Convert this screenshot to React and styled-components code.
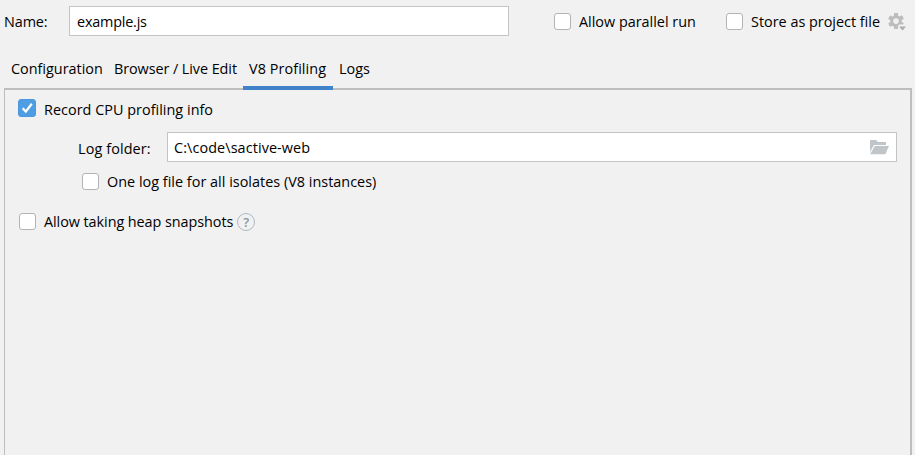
import React from "react";
import styled, { createGlobalStyle } from "styled-components";

const GlobalStyle = createGlobalStyle`
  * { box-sizing: border-box; }
  html, body { margin: 0; background: #f1f1f1; overflow: hidden; }
  body { font: 14.4px/20px "Open Sans", "Noto Sans", sans-serif; color: #000; }
`;

const Window = styled.div`
  display: flex;
  flex-direction: column;
  width: 915px;
  height: 455px;
  overflow: hidden;
  background: #f1f1f1;
`;

const Header = styled.header`
  display: flex;
  align-items: center;
  height: 30px;
  margin-top: 6px;
  padding-left: 4px;
`;

const Text = styled.span`
  display: block;
  white-space: nowrap;
  letter-spacing: ${(p) => p.$spacing || 0}px;
`;

const NameLabel = styled.label`
  width: 65px;
  padding-top: 1px;
`;

const Field = styled.div`
  display: flex;
  align-items: center;
  width: ${(p) => p.$width}px;
  height: 30px;
  padding: 2px 7px 0 ${(p) => p.$inset ?? 7}px;
  border: 1px solid #c4c4c4;
  background: #fff;
`;

const Spacer = styled.div`
  flex: 1;
`;

const Option = styled.div`
  display: flex;
  align-items: center;
  gap: 8px;
  height: 20px;
`;

const RecordOption = styled(Option)`
  height: 22px;
  margin-bottom: -2px;
`;

const Box = styled.span`
  display: flex;
  flex: none;
  width: ${(p) => (p.$checked ? 18 : 17)}px;
  height: ${(p) => (p.$checked ? 18 : 17)}px;
  margin-left: ${(p) => (p.$checked ? -1 : 0)}px;
  margin-bottom: ${(p) => (p.$checked ? 4 : 1)}px;
  border-radius: 3px;
  border: 1px solid ${(p) => (p.$checked ? "#4b97dc" : "#b4b4b4")};
  background: ${(p) => (p.$checked ? "#4f9ee3" : "#fff")};
`;

const HeaderOption = styled(Option)`
  margin-left: ${(p) => p.$gap}px;
  padding-top: 1px;
`;

const GearIcon = styled.svg`
  flex: none;
  width: 18px;
  height: 19px;
  margin: 2px 9px 0 8px;
`;

const FolderIcon = styled.svg`
  flex: none;
  width: 19px;
  height: 15px;
  margin-bottom: 2px;
`;

const Tabs = styled.nav`
  display: flex;
  height: 32px;
  margin: 22px 0 -2px 5px;
`;

const Tab = styled.div`
  width: ${(p) => p.$width}px;
  height: 32px;
  padding: 1px 0 0 6px;
  border-bottom: 4px solid ${(p) => (p.$active ? "#4083c9" : "transparent")};
  z-index: 1;
`;

const Panel = styled.main`
  flex: 1;
  width: 908px;
  margin-left: 4px;
  padding: 9px 14px 0;
  border: solid #bebebe;
  border-width: 2px 2px 0 1px;
`;

const FolderRow = styled.div`
  display: flex;
  align-items: center;
  width: 819px;
  height: 30px;
  margin: 13px 0 0 59px;
`;

const FolderLabel = styled.label`
  width: 89px;
  padding-top: 4px;
`;

const NestedOption = styled(Option)`
  margin: 10px 0 20px 63px;
`;

const Help = styled.span`
  display: grid;
  place-items: center;
  flex: none;
  width: 18px;
  height: 18px;
  margin: 0 0 1px -4px;
  border: 1.5px solid #aeb9c0;
  border-radius: 50%;
  color: #8b969e;
  font: 600 13px/16px "Open Sans", sans-serif;
`;

function Checkbox({ checked }) {
  return (
    <Box $checked={checked}>
      {checked && (
        <svg width="16" height="16" viewBox="0 0 16 16" fill="none">
          <path d="M3.7 8.3 6.8 11.6 12.8 3.8" stroke="#fff" strokeWidth="2.3" />
        </svg>
      )}
    </Box>
  );
}

function Gear() {
  return (
    <GearIcon viewBox="0 0 18 19" fill="#bdbdbd">
      <path
        fillRule="evenodd"
        d="M6 0h4v2.4l1.7 1 2.2-1.2 2 3.4-2.1 1.3v2l2.1 1.3-.8 1.4H11l-.7 1-.3.1V16H6v-2.3l-1.7-1-2.2 1.1-2-3.4 2.1-1.2v-2L.1 5.8l2-3.4 2.2 1.1L6 2.5ZM8 5.3a2.8 2.8 0 1 0 0 5.6 2.8 2.8 0 0 0 0-5.6Z"
      />
      <path d="M11 13.5h7L14.5 17.5Z" fill="#adadad" />
    </GearIcon>
  );
}

function Folder() {
  return (
    <FolderIcon viewBox="0 0 19 15" fill="#bfc5c9">
      <path d="M0 0h6l2 2h8v3H4L0 12Z" />
      <path d="M4.8 6H19l-3.7 8.2H0Z" />
    </FolderIcon>
  );
}

export default function App() {
  return (
    <>
      <GlobalStyle />
      <Window>
        <Header>
          <NameLabel><Text $spacing={-0.1}>Name:</Text></NameLabel>
          <Field $width={440}><Text $spacing={-0.2}>example.js</Text></Field>
          <HeaderOption $gap={45}>
            <Checkbox />
            <Text>Allow parallel run</Text>
          </HeaderOption>
          <Spacer />
          <HeaderOption $gap={0}>
            <Checkbox />
            <Text>Store as project file</Text>
          </HeaderOption>
          <Gear />
        </Header>
        <Tabs>
          <Tab $width={103}><Text>Configuration</Text></Tab>
          <Tab $width={135}><Text $spacing={-0.07}>Browser / Live Edit</Text></Tab>
          <Tab $width={90} $active><Text $spacing={0.08}>V8 Profiling</Text></Tab>
          <Tab $width={50}><Text>Logs</Text></Tab>
        </Tabs>
        <Panel>
          <RecordOption>
            <Checkbox checked />
            <Text $spacing={0.03}>Record CPU profiling info</Text>
          </RecordOption>
          <FolderRow>
            <FolderLabel><Text $spacing={0.12}>Log folder:</Text></FolderLabel>
            <Field $width={730} $inset={6}>
              <Text $spacing={0.1}>C:\code\sactive-web</Text>
              <Spacer />
              <Folder />
            </Field>
          </FolderRow>
          <NestedOption>
            <Checkbox />
            <Text $spacing={0.02}>One log file for all isolates (V8 instances)</Text>
          </NestedOption>
          <Option>
            <Checkbox />
            <Text $spacing={-0.06}>Allow taking heap snapshots</Text>
            <Help>?</Help>
          </Option>
        </Panel>
      </Window>
    </>
  );
}
